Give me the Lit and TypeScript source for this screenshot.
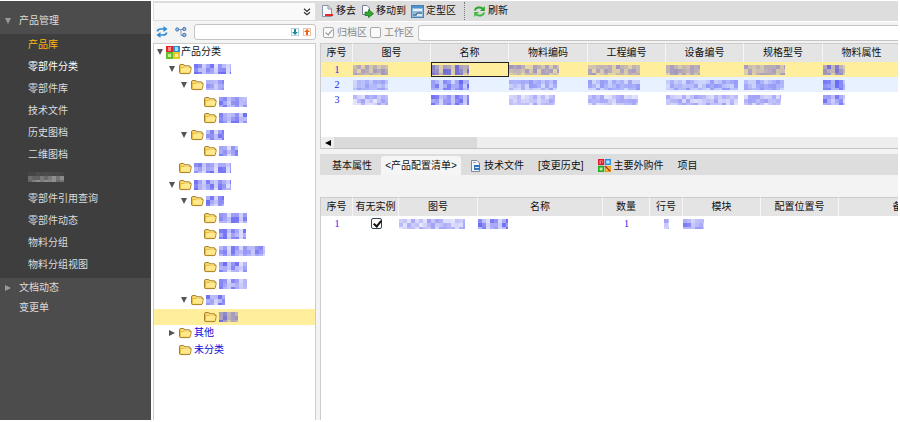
import { LitElement, html, svg, css, nothing } from "lit";
import { customElement, property } from "lit/decorators.js";
import { classMap } from "lit/directives/class-map.js";

/* Mosaic strip that masks a confidential value. */
@customElement("masked-text")
class MaskedText extends LitElement {
  @property({ type: Number }) width = 36;
  @property({ type: Number }) seed = 1;
  @property() tone = "dense";

  static styles = css`
    :host { display: inline-block; vertical-align: middle; line-height: 0; }
    svg { display: block; }
  `;

  render() {
    const cell = 4;
    const cols = Math.ceil(this.width / cell);
    const base = this.tone === "dense" ? 0.3 : this.tone === "grey" ? 0.12 : 0.12;
    const span = this.tone === "dense" ? 0.4 : this.tone === "grey" ? 0.35 : 0.34;
    const fill = this.tone === "grey" ? "#ffffff" : "#3030ee";
    let s = this.seed * 7919 + 17;
    const next = () => {
      s = (s * 1103515245 + 12345) % 2147483648;
      return s / 2147483648;
    };
    const cells = [];
    for (let r = 0; r < 3; r++) {
      for (let c = 0; c < cols; c++) {
        const gap = this.tone === "dense" && c % 3 === 2 ? 0.5 : 1;
        const edge = this.tone === "grey" && r === 0 ? 0.2 : 1;
        const a = (base + next() * span) * gap * edge;
        const w = Math.min(cell, this.width - c * cell);
        cells.push(svg`<rect x=${c * cell} y=${r * cell} width=${w} height=${r === 2 ? 2 : cell} fill-opacity=${a.toFixed(2)} />`);
      }
    }
    return html`<svg width=${this.width} height="10" fill=${fill} shape-rendering="crispEdges" aria-hidden="true">${cells}</svg>`;
  }
}

const folder = html`<svg class="folder" width="13" height="12" viewBox="0 0 13 12" aria-hidden="true">
  <path d="M.5 3 Q.5 1.5 1.8 1.5 H4.6 L6 2.8 H10 Q11 2.8 11 4 L12.2 4.6 L11.4 9.6 Q11.2 10.6 10 10.6 H1.8 Q.5 10.6 .5 9.4Z" fill="#e8bc3c" stroke="#a8802a" />
  <path d="M2.2 5 H11.7 L10.9 9.8 H1.8Z" fill="#ffe98c" />
  <path d="M1.5 3 H4.4 L5.6 4 H10" fill="none" stroke="#fff3b5" />
</svg>`;

const blocks = html`<svg width="14" height="13" viewBox="0 0 14 13" aria-hidden="true">
  <rect width="7" height="6" fill="#e02828" /><rect x="7" width="7" height="6" fill="#2a8fe0" />
  <rect y="6" width="7" height="7" fill="#63c02c" /><rect x="7" y="6" width="7" height="7" fill="#e8c828" />
  <rect x="2" y="1" width="3" height="4" fill="#ff8c8c" /><rect x="9" y="1" width="3" height="4" fill="#a8dcff" />
  <rect x="2" y="8" width="3" height="3" fill="#c4ee9c" /><rect x="9" y="8" width="3" height="3" fill="#fff0a0" />
</svg>`;

const partsIcon = html`<svg width="13" height="13" viewBox="0 0 13 13" aria-hidden="true">
  <path d="M.8 .8H5.4V5.2H.8Z" fill="#ffb0b0" stroke="#e01c2c" stroke-width="1.6" />
  <path d="M7.6 .8H12.2V5.2H7.6Z" fill="#c4e6ff" stroke="#2a8fe0" stroke-width="1.4" />
  <path d="M.8 7.6H5.4V12.2H.8Z" fill="#b8f0a0" stroke="#22a822" stroke-width="1.6" />
  <path d="M7.6 7.6H12.2V12.2H7.6Z" fill="#ffdf50" stroke="#e8a010" stroke-width="1.4" />
  <path d="M7 7L12 12M3 2L4 5" stroke="#c82020" stroke-width="1.4" />
</svg>`;

const removeIcon = html`<svg width="13" height="13" viewBox="0 0 13 13" aria-hidden="true">
  <path d="M1.5 .5H7L10.5 4V11.5H1.5Z" fill="#f8faff" stroke="#8a93a8" /><path d="M7 .5V4H10.5" fill="none" stroke="#8a93a8" />
  <rect x="4" y="9" width="8" height="2" fill="#e02a2a" />
</svg>`;

const moveIcon = html`<svg width="13" height="13" viewBox="0 0 13 13" aria-hidden="true">
  <path d="M1.5 .5H6L8.5 3V9.5H1.5Z" fill="#fafcff" stroke="#77809a" />
  <path d="M4 7H7.5V4.5L12.5 8.7L7.5 12.7V10.5H4Z" fill="#2fa82c" stroke="#14701a" stroke-width=".7" />
</svg>`;

const zoneIcon = html`<svg width="13" height="13" viewBox="0 0 13 13" aria-hidden="true">
  <rect x=".5" y=".5" width="12" height="12" fill="#8fbce4" stroke="#4a7fb4" />
  <rect x="1" y="1" width="11" height="2" fill="#4a92d0" /><rect x="2" y="4" width="9" height="2" fill="#e8f3fd" />
  <path d="M2 10H5L6 8H11" fill="none" stroke="#4b5b70" /><rect x="6" y="9" width="5" height="2" fill="#dce8f2" />
</svg>`;

const refreshIcon = html`<svg width="13" height="13" viewBox="0 0 13 13" aria-hidden="true">
  <path d="M1.8 5.6C2.6 2.4 7 1.4 9.6 3.6" fill="none" stroke="#2ba52b" stroke-width="2" /><path d="M11.8 1V6H7Z" fill="#2ba52b" />
  <path d="M11.2 7.4C10.4 10.6 6 11.6 3.4 9.4" fill="none" stroke="#3fb83f" stroke-width="2" /><path d="M1.2 12V7H6Z" fill="#3fb83f" />
</svg>`;

const docIcon = html`<svg width="11" height="12" viewBox="0 0 11 12" aria-hidden="true">
  <path d="M1.5 .5H7L9.5 3V11.5H1.5Z" fill="#f4f6fa" stroke="#7d879c" /><path d="M3 2.5H6" stroke="#a0a8b8" />
  <rect x="4" y="5" width="6" height="5" fill="#2f74c0" /><rect x="5" y="7" width="4" height="1" fill="#d4e6f8" />
</svg>`;

const syncIcon = html`<svg width="12" height="12" viewBox="0 0 12 12" aria-hidden="true">
  <path d="M1.5 5.5C1.5 3.5 3 3 5 3H8.5" fill="none" stroke="#2f8bd8" stroke-width="1.7" /><path d="M7.5 0L11.5 3L7.5 6Z" fill="#2f8bd8" />
  <path d="M10.5 6.5C10.5 8.5 9 9 7 9H3.5" fill="none" stroke="#2f8bd8" stroke-width="1.7" /><path d="M4.5 6L.5 9L4.5 12Z" fill="#2f8bd8" />
</svg>`;

const nodesIcon = html`<svg width="12" height="12" viewBox="0 0 12 12" aria-hidden="true">
  <path d="M3.5 3.5H8.5M6 3.5V9.5H8.5" fill="none" stroke="#8a94a8" />
  <circle cx="2.2" cy="3.5" r="1.6" fill="#9cc2f0" stroke="#3d6fb0" />
  <circle cx="9.3" cy="3" r="1.6" fill="#9cc2f0" stroke="#3d6fb0" />
  <circle cx="9.3" cy="9" r="1.7" fill="#9cc2f0" stroke="#3d6fb0" />
</svg>`;

const arrowIcon = (down: boolean) => html`<svg width="8" height="8" viewBox="0 0 8 8" aria-hidden="true">
  <rect x=".5" y=".5" width="7" height="7" fill="#fff" stroke=${down ? "#b4d0d8" : "#e8c4b0"} />
  ${down
    ? svg`<path d="M3 1H5V4H7L4 7L1 4H3Z" fill="#1a8ca8" />`
    : svg`<path d="M3 7H5V4H7L4 1L1 4H3Z" fill="#ee6410" />`}
</svg>`;

const caret = (open: boolean) => html`<svg width="8" height="8" viewBox="0 0 8 8" fill="currentColor" aria-hidden="true">
  <path d=${open ? "M1 1H7L4 7Z" : "M1 1L7 4L1 7Z"} />
</svg>`;

type Node = { level: number; open?: boolean; text?: string; mask?: number; selected?: boolean };
const tree: Node[] = [
  { level: 0, open: true, text: "产品分类" },
  { level: 1, open: true, mask: 37 },
  { level: 2, open: true, mask: 18 },
  { level: 3, mask: 28 },
  { level: 3, mask: 28 },
  { level: 2, open: true, mask: 18 },
  { level: 3, mask: 19 },
  { level: 1, mask: 37 },
  { level: 1, open: true, mask: 37 },
  { level: 2, open: true, mask: 18 },
  { level: 3, mask: 28 },
  { level: 3, mask: 27 },
  { level: 3, mask: 46 },
  { level: 3, mask: 28 },
  { level: 3, mask: 28 },
  { level: 2, open: true, mask: 19 },
  { level: 3, mask: 19, selected: true },
  { level: 1, open: false, text: "其他" },
  { level: 1, text: "未分类" },
];

const menu = ["产品库", "零部件分类", "零部件库", "技术文件", "历史图档", "二维图档", "", "零部件引用查询", "零部件动态", "物料分组", "物料分组视图"];

const partCols: [string, number][] = [
  ["序号", 32], ["图号", 78], ["名称", 78], ["物料编码", 79], ["工程编号", 78], ["设备编号", 78], ["规格型号", 79], ["物料属性", 78],
];
const partRows = [
  [35, 38, 50, 52, 34, 41, 22],
  [35, 38, 48, 52, 72, 40, 22],
  [35, 38, 46, 50, 72, 37, 22],
];
const bomCols: [string, number][] = [
  ["序号", 32], ["有无实例", 46], ["图号", 79], ["名称", 125], ["数量", 47], ["行号", 33], ["模块", 78], ["配置位置号", 78], ["备注", 128],
];

@customElement("app-root")
class AppRoot extends LitElement {
  static styles = css`
    :host {
      display: flex; box-sizing: border-box; height: 100vh; padding: 1px 2px 2px 0; overflow: hidden;
      background: #fff; color: #111; font: 10px/12px "Liberation Sans", "Noto Sans CJK SC", sans-serif;
    }
    * { box-sizing: border-box; }
    svg { display: block; flex: none; }
    button, input, select { font: inherit; color: inherit; margin: 0; padding: 0; border: 0; background: none; }
    a { color: inherit; text-decoration: none; }
    ul { list-style: none; margin: 0; padding: 0; }

    .side { flex: none; width: 151px; background: #4c4c4c; color: #dcdcdc; }
    .group { display: flex; align-items: center; gap: 7px; width: 100%; height: 20px; padding-left: 4px; text-align: left; }
    .group.first { height: 33px; padding-top: 6px; }
    .group svg { color: #999; }
    .menu { background: #3e3e3e; padding-bottom: 2px; }
    .menu a { display: flex; align-items: center; height: 22px; padding-left: 28px; }
    .menu .current { color: #ffb512; }
    .menu .hover { color: #fff; }
    .leaf { display: flex; align-items: center; height: 20px; padding-left: 19px; }

    .nav { flex: none; display: flex; flex-direction: column; width: 165px; margin-left: 2px; background: #f4f4f4; }
    .combo { display: flex; padding: 2px 3px 1px 1px; background: #ddd; height: 20px; }
    .combo label { display: grid; flex: 1; align-items: center; justify-items: end; background: #f9f9f9; }
    .combo select, .combo svg { grid-area: 1 / 1; }
    .combo select { width: 100%; height: 100%; appearance: none; }
    .combo svg { margin-right: 4px; pointer-events: none; }
    .finder { display: flex; align-items: center; gap: 7px; height: 22px; padding: 0 2px 0 3px; }
    .search { display: flex; align-items: center; flex: 1; gap: 4px; height: 16px; padding: 0 4px; background: #fff; border: 1px solid #c4c4c4; border-radius: 3px; min-width: 0; }
    .search input { flex: 1; min-width: 0; }
    .tree { flex: 1; background: #fff; border: 1px solid #ccc; border-bottom: 0; margin-right: 2px; }
    .nodes { display: flex; flex-direction: column; height: 314px; }
    .node { flex: 1; display: flex; align-items: center; color: #0c0cdc; }
    .node.selected { background: #ffee9c; }
    .toggle { flex: none; width: 10px; height: 8px; margin-left: 2px; color: #555; }
    .l0 { color: #111; }
    .l1 { padding-left: 12px; }
    .l2 { padding-left: 24px; }
    .l3 { padding-left: 37px; }
    .node .folder { margin: 0 2px 0 1px; }
    .l0 svg + span { margin-left: 1px; }

    .main { flex: 1; min-width: 0; display: flex; flex-direction: column; background: #f3f3f3; }
    .tools { display: flex; align-items: center; height: 20px; flex: none; padding-left: 3px; gap: 5px; background: #ddd; }
    .tools button { display: flex; align-items: center; gap: 2px; white-space: nowrap; }
    .sep { width: 0; height: 18px; margin: 0 3px; border-left: 1px dotted #777; }
    .filter { display: flex; align-items: center; flex: none; height: 22px; gap: 3px; padding-left: 5px; color: #888; border-top: 1px solid #fff; }
    .filter label { display: flex; align-items: center; gap: 3px; }
    .filter .query { flex: 1; min-width: 0; height: 16px; margin-left: 1px; background: #fff; border: 1px solid #c4c4c4; border-right: 0; border-radius: 3px 0 0 3px; }
    .tick { position: relative; appearance: none; width: 11px; height: 11px; border: 1px solid #a8a8a8; border-radius: 2px; background: #fafafa; color: #888; }
    .tick:checked::after { content: ""; position: absolute; left: 3px; top: 0; width: 3px; height: 6px; border: solid currentColor; border-width: 0 1px 1px 0; transform: rotate(40deg); }
    .tick.strong { display: block; margin: 0 auto; border-color: #345; background: #fff; color: #111; }
    .tick.strong:checked::after { border-width: 0 2px 2px 0; }

    .panel { flex: none; margin-left: 2px; border-left: 1px solid #ccc; background: #fff; overflow: hidden; }
    .parts { height: 106px; display: flex; flex-direction: column; justify-content: space-between; border-bottom: 1px solid #c4c4c4; }
    .bom { flex: 1; }
    table { table-layout: fixed; border-collapse: separate; border-spacing: 0; }
    th { height: 19px; padding: 0; font-weight: normal; background: #e4e4e4; border-top: 1px solid #ccc; border-right: 1px solid #f6f6f6; white-space: nowrap; }
    td { height: 15px; padding: 0; line-height: 0; white-space: nowrap; }
    td.num { line-height: 12px; text-align: center; color: #2222ee; font-family: "Liberation Serif", serif; }
    .picked td { background: #ffee9c; }
    .picked .focus { outline: 1px solid #222; outline-offset: -1px; }
    .alt td { background: #e8f1ff; }
    .scroll { display: flex; height: 11px; background: #eee; }
    .scroll button { display: grid; place-items: center; width: 13px; }
    .thumb { width: 143px; background: #dadada; }
    .tabs { display: flex; flex: none; height: 21px; margin: 5px 0 22px 2px; padding: 2px 0 0 5px; background: #ddd; }
    .tabs button { display: flex; align-items: center; justify-content: center; gap: 3px; height: 19px; padding: 0 7px; white-space: nowrap; }
    .tabs .on { width: 80px; padding: 0; margin: 0 2px; background: #f5f5f5; border-radius: 3px 3px 0 0; }
  `;

  head(cols: [string, number][]) {
    return html`<thead><tr>${cols.map(([name]) => html`<th scope="col">${name}</th>`)}</tr></thead>`;
  }

  widths(cols: [string, number][]) {
    return html`<colgroup>${cols.map(([, w]) => html`<col width=${w} />`)}</colgroup>`;
  }

  total(cols: [string, number][]) {
    return cols.reduce((sum, [, w]) => sum + w, 0);
  }

  node(n: Node, i: number) {
    return html`<div class=${classMap({ node: true, selected: !!n.selected, ["l" + n.level]: true })} role="treeitem">
      <button class="toggle" aria-label="展开">${n.open === undefined ? nothing : caret(n.open)}</button>
      ${n.level === 0 ? blocks : folder}
      ${n.text ? html`<span>${n.text}</span>` : html`<masked-text width=${n.mask ?? 0} seed=${i + 3}></masked-text>`}
    </div>`;
  }

  render() {
    return html`
      <nav class="side">
        <button class="group first">${caret(true)}产品管理</button>
        <ul class="menu">
          ${menu.map((m, i) => html`<li><a href="#" class=${classMap({ current: i === 0, hover: i === 1 })}>
            ${m || html`<masked-text width="36" seed="5" tone="grey"></masked-text>`}</a></li>`)}
        </ul>
        <button class="group">${caret(false)}文档动态</button>
        <a class="leaf" href="#">变更单</a>
      </nav>

      <section class="nav">
        <div class="combo">
          <label><select aria-label="视图"><option></option></select>
            <svg width="8" height="8" viewBox="0 0 8 8" fill="none" stroke="#333" stroke-width="1.2"><path d="M1 .8L4 3.4L7 .8M1 4.2L4 6.8L7 4.2" /></svg>
          </label>
        </div>
        <div class="finder">
          <button aria-label="同步">${syncIcon}</button>
          <button aria-label="层级">${nodesIcon}</button>
          <div class="search"><input type="text" aria-label="查找" />
            <button aria-label="向下">${arrowIcon(true)}</button><button aria-label="向上">${arrowIcon(false)}</button></div>
        </div>
        <div class="tree"><div class="nodes" role="tree">${tree.map((n, i) => this.node(n, i))}</div></div>
      </section>

      <main class="main">
        <div class="tools">
          <button>${removeIcon}移去</button>
          <button>${moveIcon}移动到</button>
          <button>${zoneIcon}定型区</button>
          <span class="sep"></span>
          <button>${refreshIcon}刷新</button>
        </div>
        <div class="filter">
          <label><input class="tick" type="checkbox" checked />归档区</label>
          <label><input class="tick" type="checkbox" />工作区</label>
          <input class="query" type="text" aria-label="查询" />
        </div>
        <div class="panel parts">
          <table width=${this.total(partCols)}>
            ${this.widths(partCols)}${this.head(partCols)}
            <tbody>${partRows.map((row, r) => html`<tr class=${classMap({ picked: r === 0, alt: r === 1 })}>
              <td class="num">${r + 1}</td>
              ${row.map((w, c) => html`<td class=${classMap({ focus: c === 1 })}>
                <masked-text width=${w} seed=${r * 9 + c + 40} tone=${c === 1 || c === 6 ? "dense" : "light"}></masked-text></td>`)}
            </tr>`)}</tbody>
          </table>
          <div class="scroll">
            <button aria-label="向左滚动"><svg width="6" height="6" viewBox="0 0 6 6"><path d="M6 0V6L0 3Z" /></svg></button>
            <div class="thumb"></div>
          </div>
        </div>
        <div class="tabs" role="tablist">
          <button role="tab">基本属性</button>
          <button role="tab" class="on" aria-selected="true">&lt;产品配置清单&gt;</button>
          <button role="tab">${docIcon}技术文件</button>
          <button role="tab">[变更历史]</button>
          <button role="tab">${partsIcon}主要外购件</button>
          <button role="tab">项目</button>
        </div>
        <div class="panel bom">
          <table width=${this.total(bomCols)}>
            ${this.widths(bomCols)}${this.head(bomCols)}
            <tbody><tr>
              <td class="num">1</td>
              <td><input class="tick strong" type="checkbox" checked aria-label="有无实例" /></td>
              <td><masked-text width="66" seed="81" tone="light"></masked-text></td>
              <td><masked-text width="30" seed="82"></masked-text></td>
              <td class="num">1</td>
              <td align="center"><masked-text width="5" seed="83" tone="light"></masked-text></td>
              <td><masked-text width="21" seed="84"></masked-text></td>
              <td></td><td></td>
            </tr></tbody>
          </table>
        </div>
      </main>
    `;
  }
}
